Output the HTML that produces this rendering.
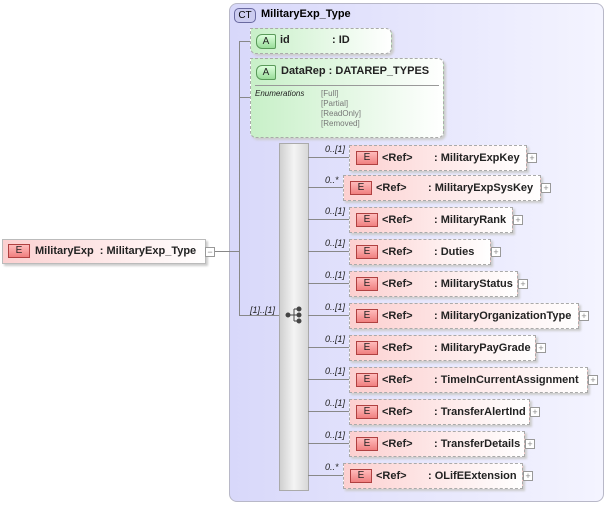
<!DOCTYPE html>
<html><head><meta charset="utf-8"><style>
body{margin:0;width:605px;height:505px;background:#fff;position:relative;overflow:hidden;font-family:"Liberation Sans",Arial,sans-serif;}
.a{position:absolute;}
.ct{left:229px;top:3px;width:373px;height:497px;border:1px solid #b8b8c8;border-radius:8px;background:linear-gradient(90deg,#d8d8fa,#f4f4ff);}
.ln{position:absolute;background:#888;}
.el{position:absolute;height:24px;border:1px dashed #aaa;background:linear-gradient(90deg,#fcd0d0,#fff);box-shadow:2px 2px 2px #ccc;font-size:11px;font-weight:bold;color:#222;}
.ic{position:absolute;width:20px;height:12px;border:1px solid #b04040;background:linear-gradient(#fbb,#f08080);font-size:10px;font-weight:normal;text-align:center;line-height:12px;color:#222;}
.el .r{position:absolute;top:5px;line-height:14px;}
.pl{position:absolute;width:8px;height:8px;border:1px solid #999;background:#fff;font-size:9px;line-height:8px;text-align:center;color:#888;}
.m{position:absolute;font-size:9px;font-style:italic;color:#222;}
.at{position:absolute;border:1px dashed #aaa;border-radius:0 6px 6px 6px;background:linear-gradient(90deg,#c8f0c8,#fff);box-shadow:2px 2px 2px #ccc;font-size:11px;font-weight:bold;color:#222;}
.ai{position:absolute;width:18px;height:13px;border:1px solid #5a9a5a;border-radius:6px 2px 2px 6px;background:linear-gradient(#dfd,#9d9);font-size:10px;text-align:center;line-height:13px;font-weight:normal;}
</style></head><body>
<div class="a ct"></div>
<div class="a" style="left:234px;top:8px;width:20px;height:13px;border:1px solid #6a6aa0;border-radius:5px;background:#ccccf0;font-size:10px;text-align:center;line-height:13px;">CT</div>
<div class="a" style="left:261px;top:8px;font-size:11px;font-weight:bold;">MilitaryExp_Type</div>

<div class="ln" style="left:214px;top:251px;width:26px;height:1px"></div>
<div class="ln" style="left:239px;top:41px;width:1px;height:275px"></div>
<div class="ln" style="left:239px;top:41px;width:12px;height:1px"></div>
<div class="ln" style="left:239px;top:97px;width:12px;height:1px"></div>
<div class="ln" style="left:239px;top:315px;width:40px;height:1px"></div>
<div class="m" style="left:250px;top:305px">[1]..[1]</div>

<div class="at" style="left:250px;top:28px;width:140px;height:24px">
<div class="ai" style="left:5px;top:5px">A</div><span class="a" style="left:29px;top:5px;line-height:13px">id</span><span class="a" style="left:81px;top:5px;line-height:13px">: ID</span></div>
<div class="at" style="left:250px;top:58px;width:192px;height:78px">
<div class="ai" style="left:5px;top:6px">A</div><span class="a" style="left:30px;top:6px;line-height:13px">DataRep : DATAREP_TYPES</span>
<div class="a" style="left:4px;top:26px;width:184px;height:1px;background:#999"></div>
<span class="a" style="left:4px;top:30px;font-size:8px;font-style:italic;font-weight:normal">Enumerations</span>
<span class="a" style="left:70px;top:30px;font-size:8px;font-weight:normal;color:#777;line-height:10px">[Full]<br>[Partial]<br>[ReadOnly]<br>[Removed]</span></div>

<div class="el" style="left:2px;top:239px;width:202px;height:23px;border-style:solid;border-color:#bbb;">
<div class="ic" style="left:5px;top:4px">E</div><span class="r" style="left:32px;top:4px">MilitaryExp&nbsp; : MilitaryExp_Type</span></div>
<div class="pl" style="left:205px;top:247px">−</div>

<div class="a" style="left:279px;top:143px;width:28px;height:346px;border:1px solid #aaa;background:linear-gradient(90deg,#d0d0d0,#f4f4f4,#d8d8d8);"></div>
<svg class="a" style="left:285px;top:306px" width="20" height="20"><g fill="#444" stroke="#444"><circle cx="3" cy="9" r="2"/><circle cx="14" cy="3" r="2"/><circle cx="14" cy="9" r="2"/><circle cx="14" cy="15" r="2"/><path d="M3 9H9M9 3V15M9 3H14M9 15H14M9 9H14" fill="none"/></g></svg>

<div class="ln" style="left:308px;top:157px;width:41px;height:1px"></div><div class="m" style="left:325px;top:144px">0..[1]</div>
<div class="el" style="left:349px;top:145px;width:176px"><div class="ic" style="left:6px;top:5px">E</div><span class="r" style="left:32px">&lt;Ref&gt;</span><span class="r" style="left:84px">: MilitaryExpKey</span></div><div class="pl" style="left:527px;top:153px">+</div>

<div class="ln" style="left:308px;top:187px;width:35px;height:1px"></div><div class="m" style="left:325px;top:175px">0..*</div>
<div class="el" style="left:343px;top:175px;width:196px"><div class="ic" style="left:6px;top:5px">E</div><span class="r" style="left:32px">&lt;Ref&gt;</span><span class="r" style="left:84px">: MilitaryExpSysKey</span></div><div class="pl" style="left:541px;top:183px">+</div>

<div class="ln" style="left:308px;top:219px;width:41px;height:1px"></div><div class="m" style="left:325px;top:206px">0..[1]</div>
<div class="el" style="left:349px;top:207px;width:162px"><div class="ic" style="left:6px;top:5px">E</div><span class="r" style="left:32px">&lt;Ref&gt;</span><span class="r" style="left:84px">: MilitaryRank</span></div><div class="pl" style="left:513px;top:215px">+</div>

<div class="ln" style="left:308px;top:251px;width:41px;height:1px"></div><div class="m" style="left:325px;top:238px">0..[1]</div>
<div class="el" style="left:349px;top:239px;width:140px"><div class="ic" style="left:6px;top:5px">E</div><span class="r" style="left:32px">&lt;Ref&gt;</span><span class="r" style="left:84px">: Duties</span></div><div class="pl" style="left:491px;top:247px">+</div>

<div class="ln" style="left:308px;top:283px;width:41px;height:1px"></div><div class="m" style="left:325px;top:270px">0..[1]</div>
<div class="el" style="left:349px;top:271px;width:167px"><div class="ic" style="left:6px;top:5px">E</div><span class="r" style="left:32px">&lt;Ref&gt;</span><span class="r" style="left:84px">: MilitaryStatus</span></div><div class="pl" style="left:518px;top:279px">+</div>

<div class="ln" style="left:308px;top:315px;width:41px;height:1px"></div><div class="m" style="left:325px;top:302px">0..[1]</div>
<div class="el" style="left:349px;top:303px;width:228px"><div class="ic" style="left:6px;top:5px">E</div><span class="r" style="left:32px">&lt;Ref&gt;</span><span class="r" style="left:84px">: MilitaryOrganizationType</span></div><div class="pl" style="left:579px;top:311px">+</div>

<div class="ln" style="left:308px;top:347px;width:41px;height:1px"></div><div class="m" style="left:325px;top:334px">0..[1]</div>
<div class="el" style="left:349px;top:335px;width:185px"><div class="ic" style="left:6px;top:5px">E</div><span class="r" style="left:32px">&lt;Ref&gt;</span><span class="r" style="left:84px">: MilitaryPayGrade</span></div><div class="pl" style="left:536px;top:343px">+</div>

<div class="ln" style="left:308px;top:379px;width:41px;height:1px"></div><div class="m" style="left:325px;top:366px">0..[1]</div>
<div class="el" style="left:349px;top:367px;width:237px"><div class="ic" style="left:6px;top:5px">E</div><span class="r" style="left:32px">&lt;Ref&gt;</span><span class="r" style="left:84px">: TimeInCurrentAssignment</span></div><div class="pl" style="left:588px;top:375px">+</div>

<div class="ln" style="left:308px;top:411px;width:41px;height:1px"></div><div class="m" style="left:325px;top:398px">0..[1]</div>
<div class="el" style="left:349px;top:399px;width:179px"><div class="ic" style="left:6px;top:5px">E</div><span class="r" style="left:32px">&lt;Ref&gt;</span><span class="r" style="left:84px">: TransferAlertInd</span></div><div class="pl" style="left:530px;top:407px">+</div>

<div class="ln" style="left:308px;top:443px;width:41px;height:1px"></div><div class="m" style="left:325px;top:430px">0..[1]</div>
<div class="el" style="left:349px;top:431px;width:174px"><div class="ic" style="left:6px;top:5px">E</div><span class="r" style="left:32px">&lt;Ref&gt;</span><span class="r" style="left:84px">: TransferDetails</span></div><div class="pl" style="left:525px;top:439px">+</div>

<div class="ln" style="left:308px;top:475px;width:35px;height:1px"></div><div class="m" style="left:325px;top:462px">0..*</div>
<div class="el" style="left:343px;top:463px;width:178px"><div class="ic" style="left:6px;top:5px">E</div><span class="r" style="left:32px">&lt;Ref&gt;</span><span class="r" style="left:84px">: OLifEExtension</span></div><div class="pl" style="left:523px;top:471px">+</div>
</body></html>
